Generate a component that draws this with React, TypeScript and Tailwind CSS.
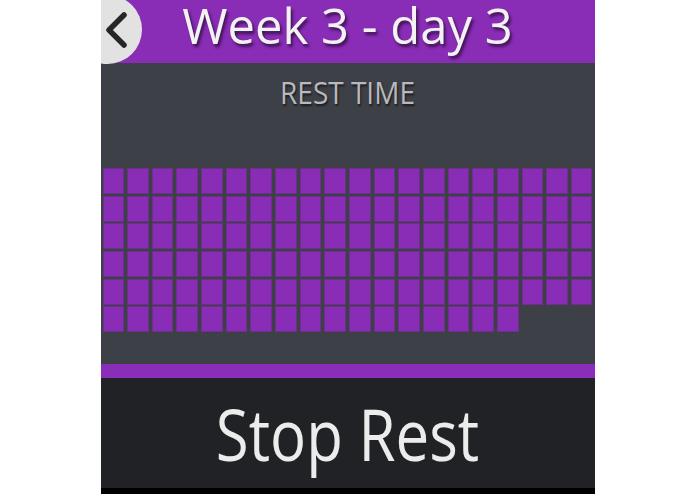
const cells = Array.from({ length: 117 }, (_, i) => i)

const BackButton = () => (
  <button className="absolute -left-[28px] -top-[5px] w-[69px] h-[69px] rounded-full bg-[#e2e2e2] flex items-center justify-end pr-[15px]">
    <svg width="22" height="36" viewBox="0 0 22 36" fill="none">
      <polyline
        points="19,3 4,18 19,33"
        stroke="#262626"
        strokeWidth="5.5"
        strokeLinecap="round"
        strokeLinejoin="round"
      />
    </svg>
  </button>
)

export default function App() {
  return (
    <div className="w-full h-[494px] bg-white" style={{ fontFamily: '"Open Sans", "Noto Sans", sans-serif' }}>
      <div className="relative mx-auto w-[494px] h-[494px] overflow-hidden flex flex-col">
        {/* header */}
        <header className="relative h-[63px] shrink-0 bg-[#892cb6] flex items-center justify-center pb-[13px]">
          <BackButton />
          <h1 className="text-[49px] leading-[50px] text-[#f2f2f2] [text-shadow:2px_3px_3px_rgba(0,0,0,0.55)]">
            Week 3 - day 3
          </h1>
        </header>

        {/* rest timer */}
        <section className="h-[301px] shrink-0 bg-[#3d4047] flex flex-col pt-[12px]">
          <p className="text-center text-[28px] leading-[34px] text-[#b9b9bd] scale-y-[1.1] [text-shadow:1px_2px_2px_rgba(0,0,0,0.6)]">
            REST TIME
          </p>
          <div className="mt-[59px] px-[2px] grid grid-cols-20 gap-x-[3px] gap-y-[1.7px] auto-rows-[26px]">
            {cells.map((i) => (
              <div key={i} className="bg-[#8a2db6] border border-[#6e2f8c]" />
            ))}
          </div>
        </section>

        <div className="h-[14px] shrink-0 bg-[#8a2db8]" />

        {/* stop button */}
        <button className="h-[110px] shrink-0 bg-[#212226] flex items-center justify-center">
          <span className="inline-block text-[60px] leading-none text-[#ececec] scale-y-[1.2]">Stop Rest</span>
        </button>

        <div className="flex-1 bg-black" />
      </div>
    </div>
  )
}
